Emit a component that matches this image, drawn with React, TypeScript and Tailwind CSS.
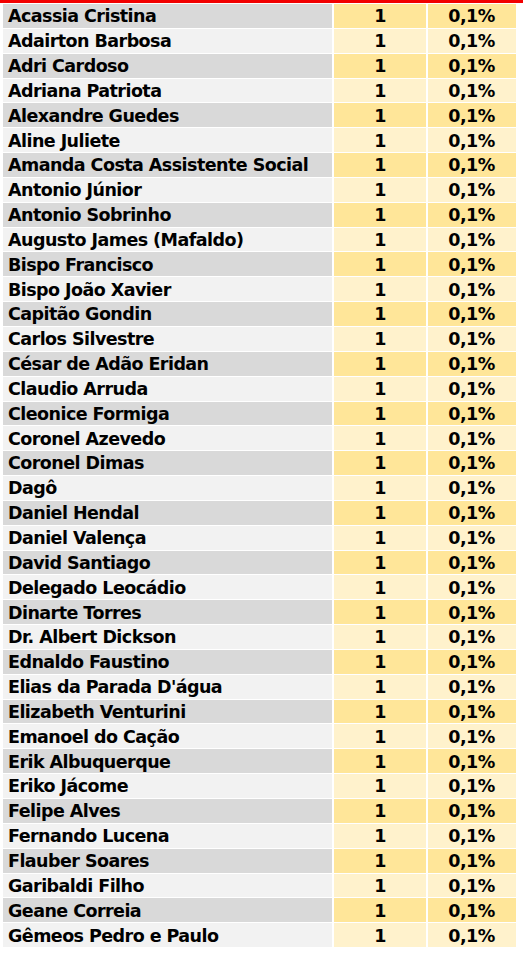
import React from 'react';

const names = [
  'Acassia Cristina',
  'Adairton Barbosa',
  'Adri Cardoso',
  'Adriana Patriota',
  'Alexandre Guedes',
  'Aline Juliete',
  'Amanda Costa Assistente Social',
  'Antonio Júnior',
  'Antonio Sobrinho',
  'Augusto James (Mafaldo)',
  'Bispo Francisco',
  'Bispo João Xavier',
  'Capitão Gondin',
  'Carlos Silvestre',
  'César de Adão Eridan',
  'Claudio Arruda',
  'Cleonice Formiga',
  'Coronel Azevedo',
  'Coronel Dimas',
  'Dagô',
  'Daniel Hendal',
  'Daniel Valença',
  'David Santiago',
  'Delegado Leocádio',
  'Dinarte Torres',
  'Dr. Albert Dickson',
  'Ednaldo Faustino',
  "Elias da Parada D'água",
  'Elizabeth Venturini',
  'Emanoel do Cação',
  'Erik Albuquerque',
  'Eriko Jácome',
  'Felipe Alves',
  'Fernando Lucena',
  'Flauber Soares',
  'Garibaldi Filho',
  'Geane Correia',
  'Gêmeos Pedro e Paulo',
];

export default function App() {
  return (
    <div className="w-[523px] h-[958px] bg-white font-['DejaVu_Sans',sans-serif] font-bold text-[17.5px] tracking-[-0.55px] text-black">
      <div className="h-[3px] bg-[#f20000]" />
      <div className="mt-[1px] flex flex-col gap-[1px] pl-[3px]">
        {names.map((name, i) => {
          const dark = i % 2 === 0;
          return (
            <div key={name} className="flex h-[23.85px] items-center">
              <div
                className={`w-[329px] h-full flex items-center pl-[5px] pt-[1px] whitespace-nowrap ${
                  dark ? 'bg-[#d9d9d9]' : 'bg-[#f2f2f2]'
                }`}
              >
                {name}
              </div>
              <div
                className={`ml-[2px] w-[92px] h-full flex items-center justify-center pt-[1px] ${
                  dark ? 'bg-[#ffe699]' : 'bg-[#fff2cc]'
                }`}
              >
                1
              </div>
              <div
                className={`ml-[1.5px] w-[88px] h-full flex items-center justify-center pt-[1px] ${
                  dark ? 'bg-[#ffe699]' : 'bg-[#fff2cc]'
                }`}
              >
                0,1%
              </div>
            </div>
          );
        })}
      </div>
    </div>
  );
}
